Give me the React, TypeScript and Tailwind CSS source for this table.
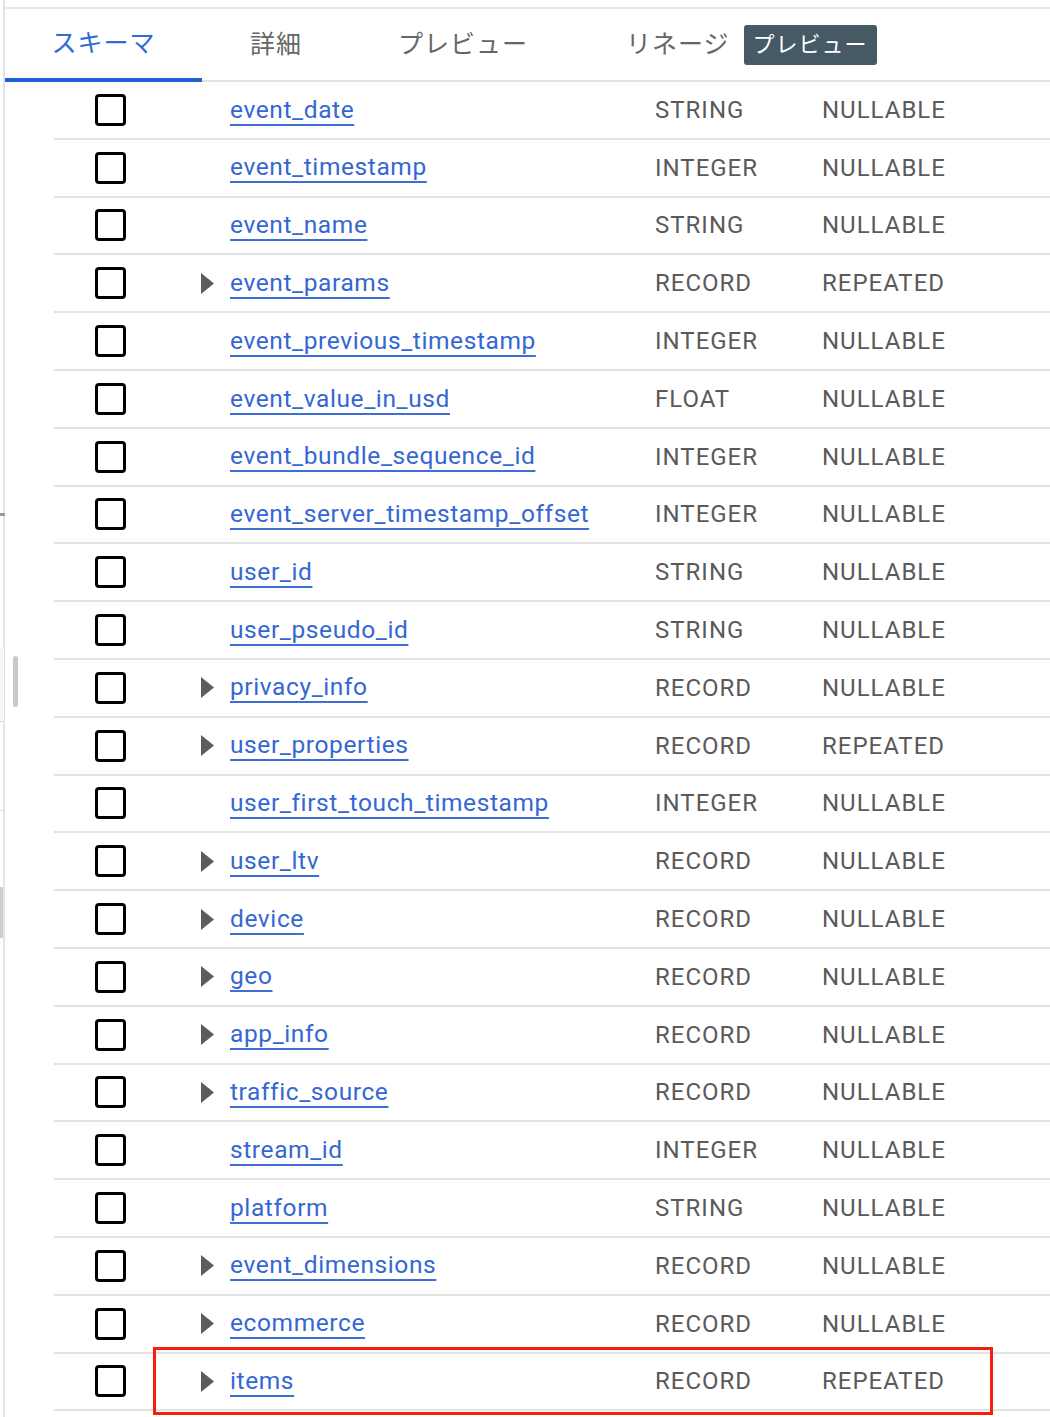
import React from "react";

type Field = { name: string; type: string; mode: string; nested?: boolean };

const fields: Field[] = [
  { name: "event_date", type: "STRING", mode: "NULLABLE" },
  { name: "event_timestamp", type: "INTEGER", mode: "NULLABLE" },
  { name: "event_name", type: "STRING", mode: "NULLABLE" },
  { name: "event_params", type: "RECORD", mode: "REPEATED", nested: true },
  { name: "event_previous_timestamp", type: "INTEGER", mode: "NULLABLE" },
  { name: "event_value_in_usd", type: "FLOAT", mode: "NULLABLE" },
  { name: "event_bundle_sequence_id", type: "INTEGER", mode: "NULLABLE" },
  { name: "event_server_timestamp_offset", type: "INTEGER", mode: "NULLABLE" },
  { name: "user_id", type: "STRING", mode: "NULLABLE" },
  { name: "user_pseudo_id", type: "STRING", mode: "NULLABLE" },
  { name: "privacy_info", type: "RECORD", mode: "NULLABLE", nested: true },
  { name: "user_properties", type: "RECORD", mode: "REPEATED", nested: true },
  { name: "user_first_touch_timestamp", type: "INTEGER", mode: "NULLABLE" },
  { name: "user_ltv", type: "RECORD", mode: "NULLABLE", nested: true },
  { name: "device", type: "RECORD", mode: "NULLABLE", nested: true },
  { name: "geo", type: "RECORD", mode: "NULLABLE", nested: true },
  { name: "app_info", type: "RECORD", mode: "NULLABLE", nested: true },
  { name: "traffic_source", type: "RECORD", mode: "NULLABLE", nested: true },
  { name: "stream_id", type: "INTEGER", mode: "NULLABLE" },
  { name: "platform", type: "STRING", mode: "NULLABLE" },
  { name: "event_dimensions", type: "RECORD", mode: "NULLABLE", nested: true },
  { name: "ecommerce", type: "RECORD", mode: "NULLABLE", nested: true },
  { name: "items", type: "RECORD", mode: "REPEATED", nested: true },
];

const jp = { fontFamily: "Roboto, 'Noto Sans CJK JP', sans-serif" };

const Row = ({ f, highlight }: { f: Field; highlight?: boolean }) => (
  <div className="relative flex items-center h-[57.8px] border-b-2 border-[#e3e3e3]">
    <div className="ml-[41px] w-[31px] h-[32px] border-[3.5px] border-black rounded-[4px]" />
    <div className="ml-[75px] w-[29px] flex items-center">
      {f.nested && (
        <svg width="13" height="21" viewBox="0 0 13 21">
          <polygon points="0,0 13,10.5 0,21" fill="#5c5c5c" />
        </svg>
      )}
    </div>
    <a className="w-[425px] text-[24.5px] tracking-[0.6px] text-[#3567d3] underline decoration-2 underline-offset-[6px] decoration-[#3f6fd6]">
      {f.name}
    </a>
    <span className="w-[167px] text-[24px] tracking-[1px] text-[#5a5a5a]">{f.type}</span>
    <span className="text-[24px] tracking-[1px] text-[#5a5a5a]">{f.mode}</span>
    {highlight && (
      <div className="absolute left-[99px] top-[-7px] w-[840px] h-[68px] border-[3px] border-[#f41f0c]" />
    )}
  </div>
);

export default function App() {
  return (
    <div className="flex w-[1050px] h-[1417px] bg-white overflow-hidden" style={jp}>
      <div className="relative w-[5px] shrink-0 border-r-2 border-[#e4e4e4]">
        <div className="absolute left-0 top-[513px] w-[5px] h-[3px] bg-[#9a9a9a]" />
        <div className="absolute left-0 top-[647px] w-[4px] h-[75px] bg-[#f7f7f7] border-b border-[#dcdcdc]" />
        <div className="absolute left-0 top-[810px] w-[4px] h-px bg-[#dcdcdc]" />
        <div className="absolute left-0 top-[887px] w-[3px] h-[51px] bg-[#cfcfcf]" />
      </div>
      <div className="relative flex-1 mt-[7px] border-t-2 border-[#e6e6e6]">
        <div className="absolute left-[8px] top-[647px] w-[5px] h-[51px] rounded-full bg-[#c9c9c9]" />
        <div className="flex h-[73px] border-b-2 border-[#e3e3e3] text-[25px] tracking-[1px]">
          <div className="flex items-center w-[197px] justify-center border-b-4 border-[#1f5fd6] mb-[-2px] text-[#2f6ad9]">
            スキーマ
          </div>
          <div className="flex items-center px-[48px] text-[#666]">詳細</div>
          <div className="flex items-center px-[48px] text-[#666]">プレビュー</div>
          <div className="flex items-center pl-[50px] text-[#666]">
            リネージ
            <span className="ml-[14px] h-[40px] flex items-center px-[9px] rounded-[3px] bg-[#455a64] text-[22px] tracking-[1px] text-white">
              プレビュー
            </span>
          </div>
        </div>
        <div className="ml-[49px]">
          {fields.map((f, i) => (
            <Row key={f.name} f={f} highlight={i === fields.length - 1} />
          ))}
        </div>
      </div>
    </div>
  );
}
